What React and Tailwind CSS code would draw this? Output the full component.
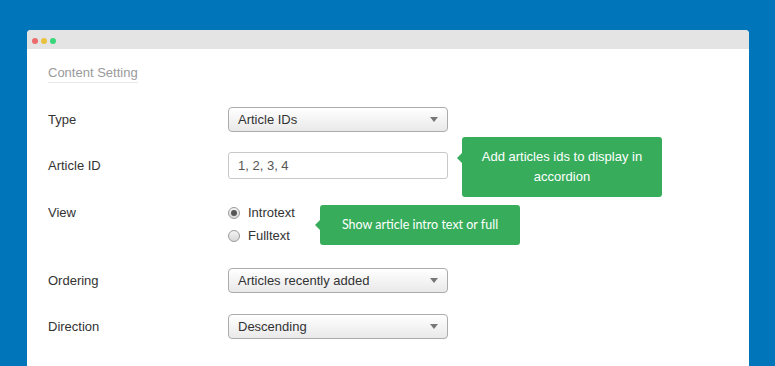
import React from "react";

function Select({ value }) {
  return (
    <div className="relative flex h-[25px] w-[220px] items-center rounded-[4px] border border-[#ababab] bg-gradient-to-b from-white to-[#e9e9e9] pl-[9px] text-[13px] text-[#333]">
      {value}
      <span className="absolute right-[9px] top-[9px] h-0 w-0 border-x-[4px] border-t-[5px] border-x-transparent border-t-[#777]" />
    </div>
  );
}

function Radio({ checked, label }) {
  return (
    <div className="flex h-[23px] items-center gap-[8px] text-[13px] text-[#333]">
      <span className="flex h-[12px] w-[12px] items-center justify-center rounded-full border border-[#9a9a9a] bg-gradient-to-b from-[#f4f4f4] to-[#d8d8d8]">
        {checked && <span className="h-[6px] w-[6px] rounded-full bg-[#555]" />}
      </span>
      {label}
    </div>
  );
}

export default function App() {
  return (
    <div
      className="h-[366px] w-[775px] overflow-hidden bg-[#0075ba] pl-[27px] pt-[30px]"
      style={{ fontFamily: '"Liberation Sans", Arial, sans-serif' }}
    >
      <div className="w-[722px] overflow-hidden rounded-t-[4px] bg-white">
        {/* title bar */}
        <div className="flex h-[19px] items-center gap-[3px] bg-[#e4e4e4] pl-[5px] pt-[2px]">
          <span className="h-[6px] w-[6px] rounded-full bg-[#ee6b6b]" />
          <span className="h-[6px] w-[6px] rounded-full bg-[#e8c13e]" />
          <span className="h-[6px] w-[6px] rounded-full bg-[#3ad77a]" />
        </div>

        <div className="h-[330px] pl-[21px] pt-[16px]">
          <div className="w-fit border-b border-[#e8e8e8] pb-[1px] text-[13px] leading-[16px] text-[#9a9a9a]">
            Content Setting
          </div>

          {/* Type */}
          <div className="mt-[24px] flex h-[25px] items-center">
            <div className="w-[180px] text-[13px] text-[#333]">Type</div>
            <Select value="Article IDs" />
          </div>

          {/* Article ID */}
          <div className="relative mt-[20px] flex h-[27px] items-center">
            <div className="w-[180px] text-[13px] text-[#333]">Article ID</div>
            <div className="flex h-[27px] w-[220px] items-center rounded-[3px] border border-[#c8c8c8] bg-white pl-[9px] text-[13px] text-[#555]">
              1, 2, 3, 4
            </div>
            <div className="absolute left-[414px] top-[-15px] h-[60px] w-[200px] rounded-[3px] bg-[#37ad5b] pt-[10px] text-center text-[13px] leading-[20px] text-white">
              <span className="absolute left-[-5px] top-[16px] h-0 w-0 border-y-[5px] border-r-[5px] border-y-transparent border-r-[#37ad5b]" />
              Add articles ids to display in
              <br />
              accordion
            </div>
          </div>

          {/* View */}
          <div className="relative mt-[22px] flex">
            <div className="flex h-[23px] w-[180px] items-center text-[13px] text-[#333]">View</div>
            <div className="flex flex-col">
              <Radio checked label="Introtext" />
              <Radio label="Fulltext" />
            </div>
            <div
              className="absolute left-[272px] top-[4px] flex h-[40px] w-[200px] items-center justify-center rounded-[3px] bg-[#37ad5b] text-[12.5px] text-white"
              style={{ fontFamily: "Lato, 'Open Sans', sans-serif" }}
            >
              <span className="absolute left-[-5px] top-[15px] h-0 w-0 border-y-[5px] border-r-[5px] border-y-transparent border-r-[#37ad5b]" />
              Show article intro text or full
            </div>
          </div>

          {/* Ordering */}
          <div className="mt-[21px] flex h-[25px] items-center">
            <div className="w-[180px] text-[13px] text-[#333]">Ordering</div>
            <Select value="Articles recently added" />
          </div>

          {/* Direction */}
          <div className="mt-[21px] flex h-[25px] items-center">
            <div className="w-[180px] text-[13px] text-[#333]">Direction</div>
            <Select value="Descending" />
          </div>
        </div>
      </div>
    </div>
  );
}
